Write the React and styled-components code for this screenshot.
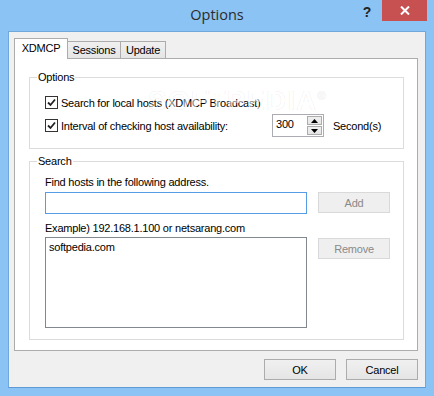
import styled, { createGlobalStyle } from 'styled-components';

const GlobalStyle = createGlobalStyle`
    body {
        margin: 0;
        font-family: "Liberation Sans", Arial, sans-serif;
        font-size: 11px;
        letter-spacing: -0.22px;
        color: #000;
    }
`;

const CheckIcon = () => (
    <svg width="9" height="9" viewBox="0 0 9 9">
        <path d="M1 4.5 L3.5 7 L8 1.5" fill="none" stroke="#222" strokeWidth="1.8" />
    </svg>
);

const Arrow = ({ up }) => (
    <svg width="7" height="4" viewBox="0 0 7 4">
        <path d={up ? 'M0 4 L3.5 0 L7 4 Z' : 'M0 0 L3.5 4 L7 0 Z'} fill="#000" />
    </svg>
);

const CheckRow = ({ label, children }) => (
    <Row>
        <CheckBox><CheckIcon /></CheckBox>
        <CheckLabel>{label}</CheckLabel>
        {children}
    </Row>
);

const App = () => {
    return (
        <>
            <GlobalStyle />
            <Window>
                <TitleBar>
                    <span />
                    <Title>Options</Title>
                    <Controls>
                        <HelpButton>?</HelpButton>
                        <CloseButton>
                            <svg width="10" height="9" viewBox="0 0 10 9">
                                <path d="M1 0.5 L9 8.5 M9 0.5 L1 8.5" stroke="#fff" strokeWidth="2" />
                            </svg>
                        </CloseButton>
                    </Controls>
                </TitleBar>

                <Client>
                    <TabStrip>
                        <Tab selected $w={54}>XDMCP</Tab>
                        <Tab $w={54}>Sessions</Tab>
                        <Tab $w={46}>Update</Tab>
                    </TabStrip>

                    <Panel>
                        <Watermark>SOFTPEDIA<sup>®</sup></Watermark>

                        <Group>
                            <GroupLabel>Options</GroupLabel>
                            <CheckRow label="Search for local hosts (XDMCP Broadcast)" />
                            <CheckRow label="Interval of checking host availability:">
                                <SpinBox>
                                    <SpinValue>300</SpinValue>
                                    <SpinColumn>
                                        <SpinButton><Arrow up /></SpinButton>
                                        <SpinButton><Arrow /></SpinButton>
                                    </SpinColumn>
                                </SpinBox>
                                <Unit>Second(s)</Unit>
                            </CheckRow>
                        </Group>

                        <Group $mt={5}>
                            <GroupLabel>Search</GroupLabel>
                            <Caption>Find hosts in the following address.</Caption>
                            <FieldRow $mt={3}>
                                <TextInput $focused />
                                <Button disabled>Add</Button>
                            </FieldRow>
                            <Caption $mt={7}>Example) 192.168.1.100 or netsarang.com</Caption>
                            <FieldRow $mt={2}>
                                <ListBox>
                                    <ListItem>softpedia.com</ListItem>
                                </ListBox>
                                <Button disabled $mt={1}>Remove</Button>
                            </FieldRow>
                        </Group>
                    </Panel>

                    <Footer>
                        <Button>OK</Button>
                        <Button>Cancel</Button>
                    </Footer>
                </Client>
            </Window>
        </>
    );
};

const Window = styled.div`
    width: 434px;
    height: 396px;
    background: #8bc3f4;
    display: flex;
    flex-direction: column;
    box-sizing: border-box;
`;

const TitleBar = styled.div`
    height: 31px;
    flex: none;
    display: grid;
    grid-template-columns: 1fr auto 1fr;
    align-items: start;
`;

const Title = styled.div`
    font-family: "Open Sans", "Noto Sans", sans-serif;
    font-size: 14.5px;
    letter-spacing: 0;
    color: #2b2b2b;
    line-height: 31px;
    margin-top: -1px;
`;

const Controls = styled.div`
    display: flex;
    justify-content: flex-end;
    padding-right: 7px;
`;

const HelpButton = styled.div`
    width: 30px;
    height: 21px;
    display: flex;
    align-items: center;
    justify-content: center;
    font-family: "Liberation Sans", Arial, sans-serif;
    font-weight: bold;
    font-size: 14px;
    color: #222;
    padding-top: 3px;
    box-sizing: border-box;
`;

const CloseButton = styled.div`
    width: 45px;
    height: 21px;
    background: #c75050;
    display: flex;
    align-items: center;
    justify-content: center;
`;

const Client = styled.div`
    flex: 1;
    margin: 0 8px 8px;
    background: #f0f0f0;
    border: 1px solid #6fa8dc;
    border-bottom-color: #5e9bd6;
    padding: 6px 7px 0 5px;
    display: flex;
    flex-direction: column;
    box-sizing: border-box;
`;

const TabStrip = styled.div`
    display: flex;
    align-items: flex-end;
    height: 20px;
    position: relative;
    z-index: 1;
`;

const Tab = styled.div`
    width: ${p => p.$w}px;
    height: ${p => (p.selected ? 21 : 17)}px;
    margin-bottom: ${p => (p.selected ? -1 : 0)}px;
    margin-left: -1px;
    &:first-child { margin-left: 0; }
    box-sizing: border-box;
    border: 1px solid #acacac;
    border-bottom: none;
    background: ${p => (p.selected ? '#fff' : 'linear-gradient(#f0f0f0, #e5e5e5)')};
    display: flex;
    align-items: center;
    justify-content: center;
    padding-bottom: ${p => (p.selected ? 2 : 0)}px;
    font-size: 11px;
    z-index: ${p => (p.selected ? 2 : 1)};
`;

const Panel = styled.div`
    position: relative;
    height: 293px;
    box-sizing: border-box;
    background: #fff;
    border: 1px solid #acacac;
    padding: 11px 13px 0 14px;
    display: flex;
    flex-direction: column;
`;

const Watermark = styled.div`
    position: absolute;
    left: 133px;
    top: 26px;
    font-family: "Liberation Sans", Arial, sans-serif;
    font-size: 28px;
    font-weight: bold;
    letter-spacing: 1px;
    color: rgba(255, 255, 255, 0.5);
    -webkit-text-stroke: 1px rgba(0, 0, 0, 0.05);
    pointer-events: none;
    sup { font-size: 12px; }
`;

const Group = styled.fieldset`
    margin: ${p => p.$mt || 0}px 0 0;
    border: 1px solid #dcdcdc;
    padding: 7px 13px 11px 15px;
    min-width: 0;
    display: flex;
    flex-direction: column;
    align-items: flex-start;
`;

const GroupLabel = styled.legend`
    margin-left: -8px;
    padding: 0 1px;
    font-size: 11px;
    line-height: 14px;
    height: 14px;
`;

const Row = styled.div`
    display: flex;
    align-items: center;
    height: 23px;
`;

const CheckBox = styled.div`
    width: 13px;
    height: 13px;
    box-sizing: border-box;
    border: 1px solid #333;
    background: #fff;
    display: flex;
    align-items: center;
    justify-content: center;
    margin-right: 3px;
`;

const CheckLabel = styled.span`
    font-size: 11px;
    width: 211px;
`;

const SpinBox = styled.div`
    width: 52px;
    height: 23px;
    box-sizing: border-box;
    border: 1px solid #abadb3;
    display: flex;
    align-items: stretch;
    background: #fff;
`;

const SpinValue = styled.div`
    flex: 1;
    padding: 3px 0 0 3px;
    font-size: 11px;
`;

const SpinColumn = styled.div`
    width: 15px;
    display: flex;
    flex-direction: column;
    gap: 1px;
    padding: 1px 1px 1px 0;
`;

const SpinButton = styled.div`
    flex: 1;
    border: 1px solid #acacac;
    background: linear-gradient(#f0f0f0, #e5e5e5);
    display: flex;
    align-items: center;
    justify-content: center;
`;

const Unit = styled.span`
    margin-left: 9px;
    font-size: 11px;
`;

const Caption = styled.div`
    margin-top: ${p => p.$mt || 0}px;
    line-height: 14px;
    font-size: 11px;
`;

const FieldRow = styled.div`
    margin-top: ${p => p.$mt || 0}px;
    display: flex;
    align-items: flex-start;
    gap: 11px;
`;

const TextInput = styled.div`
    width: 262px;
    height: 22px;
    box-sizing: border-box;
    border: 1px solid ${p => (p.$focused ? '#569de5' : '#abadb3')};
    background: #fff;
`;

const ListBox = styled.div`
    width: 262px;
    height: 91px;
    box-sizing: border-box;
    border: 1px solid #828790;
    background: #fff;
    padding: 2px 3px;
`;

const ListItem = styled.div`
    font-size: 11px;
    line-height: 14px;
`;

const Button = styled.div`
    width: 72px;
    height: 21px;
    margin-top: ${p => p.$mt || 0}px;
    box-sizing: border-box;
    display: flex;
    align-items: center;
    justify-content: center;
    font-size: 11px;
    border: 1px solid ${p => (p.disabled ? '#d9d9d9' : '#acacac')};
    background: ${p => (p.disabled ? '#efefef' : 'linear-gradient(#f0f0f0, #e5e5e5)')};
    color: ${p => (p.disabled ? '#8a8a8a' : '#000')};
`;

const Footer = styled.div`
    display: flex;
    justify-content: flex-end;
    gap: 10px;
    padding-top: 8px;
`;

export default App;
